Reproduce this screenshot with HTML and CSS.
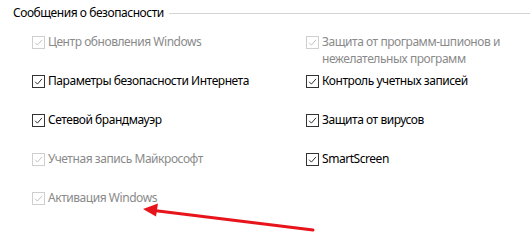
FILE: index.html
```html
<!DOCTYPE html>
<html lang="ru">
<head>
<meta charset="utf-8">
<link rel="stylesheet" href="styles.css">
</head>
<body>
<div class="panel">
  <div class="legend"><span class="legend-text">Сообщения о безопасности</span><span class="legend-line"></span></div>
  <div class="grid">
    <div class="item disabled"><span class="box"><svg viewBox="0 0 13 13"><path d="M2.5 6.8 L5.2 9.6 L10.6 3.4"/></svg></span><span class="label">Центр обновления Windows</span></div>
    <div class="item disabled"><span class="box"><svg viewBox="0 0 13 13"><path d="M2.5 6.8 L5.2 9.6 L10.6 3.4"/></svg></span><span class="label">Защита от программ-шпионов и<br>нежелательных программ</span></div>
    <div class="item"><span class="box"><svg viewBox="0 0 13 13"><path d="M2.5 6.8 L5.2 9.6 L10.6 3.4"/></svg></span><span class="label">Параметры безопасности Интернета</span></div>
    <div class="item"><span class="box"><svg viewBox="0 0 13 13"><path d="M2.5 6.8 L5.2 9.6 L10.6 3.4"/></svg></span><span class="label">Контроль учетных записей</span></div>
    <div class="item"><span class="box"><svg viewBox="0 0 13 13"><path d="M2.5 6.8 L5.2 9.6 L10.6 3.4"/></svg></span><span class="label">Сетевой брандмауэр</span></div>
    <div class="item"><span class="box"><svg viewBox="0 0 13 13"><path d="M2.5 6.8 L5.2 9.6 L10.6 3.4"/></svg></span><span class="label">Защита от вирусов</span></div>
    <div class="item disabled"><span class="box"><svg viewBox="0 0 13 13"><path d="M2.5 6.8 L5.2 9.6 L10.6 3.4"/></svg></span><span class="label">Учетная запись Майкрософт</span></div>
    <div class="item"><span class="box"><svg viewBox="0 0 13 13"><path d="M2.5 6.8 L5.2 9.6 L10.6 3.4"/></svg></span><span class="label">SmartScreen</span></div>
    <div class="item disabled"><span class="box"><svg viewBox="0 0 13 13"><path d="M2.5 6.8 L5.2 9.6 L10.6 3.4"/></svg></span><span class="label">Активация Windows</span></div>
  </div>
  <svg class="arrow" width="530" height="244" viewBox="0 0 530 244">
    <line x1="313" y1="230" x2="154" y2="210.5" stroke="#e8141b" stroke-width="3" stroke-linecap="round"/>
    <polygon points="143,209 158,203.5 156,216.5" fill="#e8141b"/>
  </svg>
</div>
</body>
</html>
```
FILE: styles.css
```css
html, body {
  margin: 0;
  padding: 0;
  background: #ffffff;
}
body {
  width: 530px;
  height: 244px;
  overflow: hidden;
  font-family: "Noto Sans", "Open Sans", sans-serif;
  font-size: 12px;
  letter-spacing: -0.45px;
  color: #000;
}
.panel {
  position: relative;
  height: 244px;
}
.legend {
  display: flex;
  align-items: center;
  padding: 3px 0 0 13px;
  height: 20px;
  line-height: 20px;
}
.legend-text {
  color: #000;
  margin-right: 5px;
}
.legend-line {
  flex: 1;
  height: 1px;
  background: #d4d4d4;
}
.grid {
  display: grid;
  grid-template-columns: 274px 1fr;
  grid-auto-rows: 39px;
  padding: 10px 0 0 32px;
}
.item {
  display: flex;
  align-items: flex-start;
  line-height: 17px;
}
.box {
  flex: none;
  width: 11px;
  height: 11px;
  border: 1px solid #333;
  margin: 3px 3px 0 0;
  display: flex;
}
.box svg {
  width: 11px;
  height: 11px;
}
.box path {
  fill: none;
  stroke: #222;
  stroke-width: 1.1;
}
.label {
  white-space: nowrap;
}
.disabled .label {
  color: #8a8a8a;
}
.disabled .box {
  border-color: #cfcfcf;
}
.disabled .box path {
  stroke: #bdbdbd;
}
.arrow {
  position: absolute;
  left: 0;
  top: 0;
  pointer-events: none;
}
```
